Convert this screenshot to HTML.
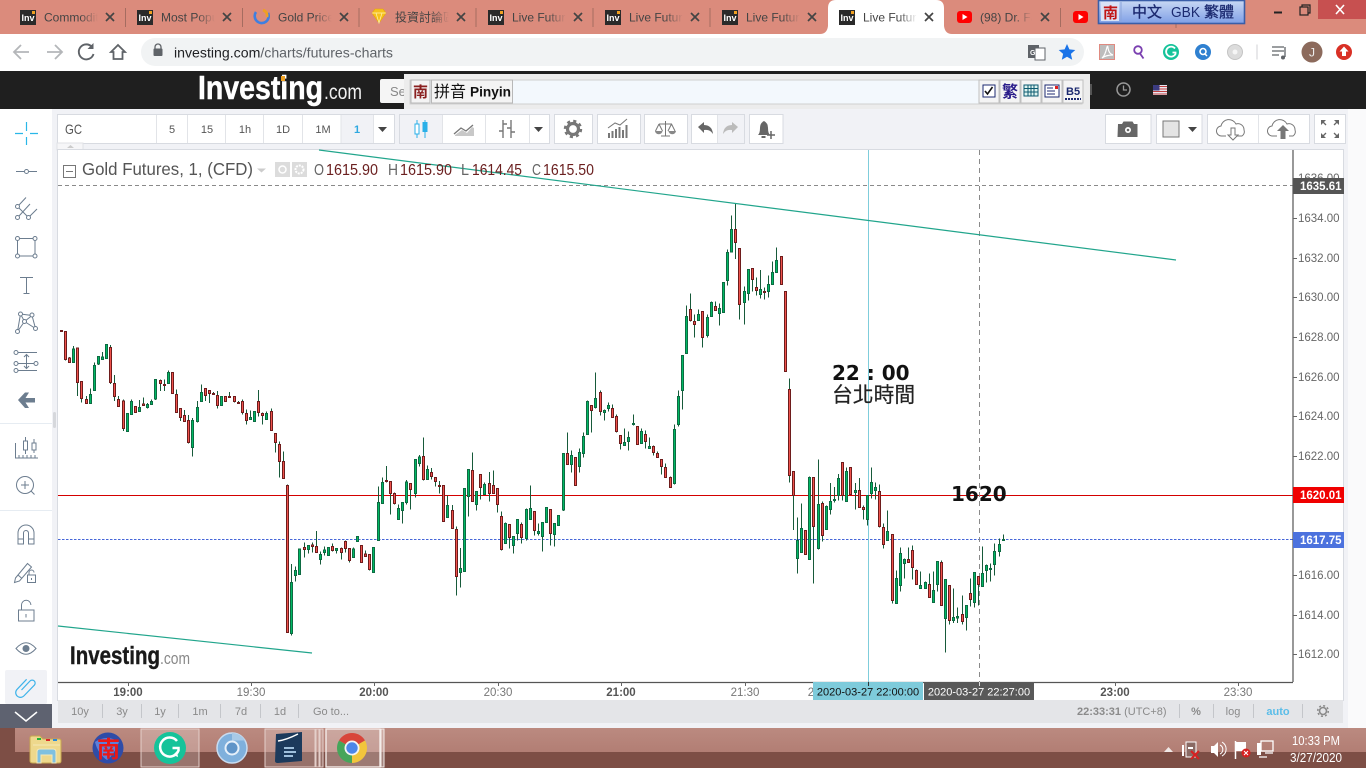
<!DOCTYPE html>
<html><head><meta charset="utf-8"><title>Live Futures Chart</title>
<style>
html,body{margin:0;padding:0;width:1366px;height:768px;overflow:hidden;background:#f1f2f6}
svg{display:block;position:absolute;left:0;top:0}
text{font-family:"Liberation Sans","Noto Sans CJK TC",sans-serif}
.t{font-size:12px;fill:#444}
.x{stroke:#444;stroke-width:1.7;fill:none}
.s{stroke:#a56c60;stroke-width:1}
.b{fill:#fff;stroke:#d8dbe1}
.ic{fill:none;stroke:#6c7d8f;stroke-width:1}
.p{font-size:11.5px;fill:#666}
.tm{font-size:11.5px;fill:#777;text-anchor:middle}
.tb{font-size:11.5px;fill:#555;text-anchor:middle;font-weight:bold}
.g{font-size:11px;fill:#8a8a8a;text-anchor:middle}
.tool{font-size:11px;fill:#555;text-anchor:middle}
</style></head>
<body>
<svg width="1366" height="768" viewBox="0 0 1366 768" xmlns="http://www.w3.org/2000/svg">
<defs>
<linearGradient id="f"><stop offset="0" stop-color="#db8b7c" stop-opacity="0"/><stop offset="1" stop-color="#db8b7c"/></linearGradient>
<linearGradient id="fw"><stop offset="0" stop-color="#fff" stop-opacity="0"/><stop offset="1" stop-color="#fff"/></linearGradient>
<linearGradient id="ime" x1="0" y1="0" x2="0" y2="1"><stop offset="0" stop-color="#c8d8f4"/><stop offset="1" stop-color="#7f9fe6"/></linearGradient>
<linearGradient id="tk" x1="0" y1="0" x2="0" y2="1"><stop offset="0" stop-color="#bb8a80"/><stop offset="1" stop-color="#b27e74"/></linearGradient>
</defs>

<!-- tab strip -->
<rect width="1366" height="34" fill="#db8b7c"/>
<path d="M820 34q7 0 8-8V8q0-8 8-8H936q8 0 8 8V26q1 8 8 8z" fill="#fff"/>

<g><rect x="20" y="10" width="16" height="15" fill="#2a2a2a"/><text x="21.5" y="21" font-size="9" font-weight="bold" fill="#fff">Inv</text><rect x="32" y="11" width="3" height="3" fill="#f0a020"/></g>
<text x="44" y="21.5" class="t">Commodities</text><rect x="80" y="6" width="18" height="24" fill="url(#f)"/><rect x="98" y="6" width="26" height="24" fill="#db8b7c"/>
<path class="x" d="M106 13l8 8m0-8l-8 8"/><path class="s" d="M125.5 8v19"/>

<g><rect x="137" y="10" width="16" height="15" fill="#2a2a2a"/><text x="138.5" y="21" font-size="9" font-weight="bold" fill="#fff">Inv</text><rect x="149" y="11" width="3" height="3" fill="#f0a020"/></g>
<text x="161" y="21.5" class="t">Most Popular</text><rect x="197" y="6" width="18" height="24" fill="url(#f)"/><rect x="215" y="6" width="26" height="24" fill="#db8b7c"/>
<path class="x" d="M223 13l8 8m0-8l-8 8"/><path class="s" d="M242.5 8v19"/>

<path d="M256 12a7 7 0 1 0 12 1" fill="none" stroke="#3f7fe0" stroke-width="2.6"/><path d="M263 10q5 2 4 7" fill="none" stroke="#f0a020" stroke-width="2.6"/>
<text x="278" y="21.5" class="t">Gold Price</text><rect x="314" y="6" width="18" height="24" fill="url(#f)"/><rect x="332" y="6" width="26" height="24" fill="#db8b7c"/>
<path class="x" d="M340 13l8 8m0-8l-8 8"/><path class="s" d="M359 8v19"/>

<path d="M372 13l3-4h8l3 4-7 10z" fill="#f6c21c" stroke="#e6a800" stroke-width=".6"/><path d="M372 13h14M376 13l3 10 3-10" stroke="#fff2b0" stroke-width=".7" fill="none"/>
<text x="395" y="21.5" class="t">投資討論區</text><rect x="431" y="6" width="18" height="24" fill="url(#f)"/><rect x="449" y="6" width="26" height="24" fill="#db8b7c"/>
<path class="x" d="M457 13l8 8m0-8l-8 8"/><path class="s" d="M476 8v19"/>

<g><rect x="488" y="10" width="16" height="15" fill="#2a2a2a"/><text x="489.5" y="21" font-size="9" font-weight="bold" fill="#fff">Inv</text><rect x="500" y="11" width="3" height="3" fill="#f0a020"/></g>
<text x="512" y="21.5" class="t">Live Futures</text><rect x="548" y="6" width="18" height="24" fill="url(#f)"/><rect x="566" y="6" width="26" height="24" fill="#db8b7c"/>
<path class="x" d="M574 13l8 8m0-8l-8 8"/><path class="s" d="M593 8v19"/>

<g><rect x="605" y="10" width="16" height="15" fill="#2a2a2a"/><text x="606.500" y="21" font-size="9" font-weight="bold" fill="#fff">Inv</text><rect x="617" y="11" width="3" height="3" fill="#f0a020"/></g>
<text x="629" y="21.5" class="t">Live Futures</text><rect x="665" y="6" width="18" height="24" fill="url(#f)"/><rect x="683" y="6" width="26" height="24" fill="#db8b7c"/>
<path class="x" d="M691 13l8 8m0-8l-8 8"/><path class="s" d="M710 8v19"/>

<g><rect x="722" y="10" width="16" height="15" fill="#2a2a2a"/><text x="723.500" y="21" font-size="9" font-weight="bold" fill="#fff">Inv</text><rect x="734" y="11" width="3" height="3" fill="#f0a020"/></g>
<text x="746" y="21.5" class="t">Live Futures</text><rect x="782" y="6" width="18" height="24" fill="url(#f)"/><rect x="800" y="6" width="22" height="24" fill="#db8b7c"/>
<path class="x" d="M808 13l8 8m0-8l-8 8"/>

<g><rect x="839" y="10" width="16" height="15" fill="#2a2a2a"/><text x="840.500" y="21" font-size="9" font-weight="bold" fill="#fff">Inv</text><rect x="851" y="11" width="3" height="3" fill="#f0a020"/></g>
<text x="863" y="21.5" class="t">Live Futures</text><rect x="899" y="6" width="18" height="24" fill="url(#fw)"/><rect x="917" y="6" width="24" height="24" fill="#fff"/>
<path class="x" d="M925 13l8 8m0-8l-8 8"/>

<rect x="957" y="11" width="15" height="12" rx="3" fill="#f00"/><path d="M962.500 14v6l5-3z" fill="#fff"/>
<text x="980" y="21.5" class="t">(98) Dr. Fauci</text><rect x="1014" y="6" width="18" height="24" fill="url(#f)"/><rect x="1032" y="6" width="26" height="24" fill="#db8b7c"/>
<path class="x" d="M1041 13l8 8m0-8l-8 8"/><path class="s" d="M1060.500 8v19"/>
<rect x="1073" y="11" width="15" height="12" rx="3" fill="#f00"/><path d="M1078.500 14v6l5-3z" fill="#fff"/>
<path class="s" d="M1176 24v4"/>

<!-- window controls -->
<rect x="1318" width="48" height="19" fill="#c75050"/>
<path d="M1274 12.500h8" stroke="#222" stroke-width="2"/>
<rect x="1300" y="7" width="8" height="8" fill="none" stroke="#222" stroke-width="1.200"/><path d="M1302 7V5h8v8h-2" fill="none" stroke="#222" stroke-width="1.200"/>
<path d="M1336 5l8 9m0-9l-8 9" stroke="#fff" stroke-width="1.600"/>

<!-- IME top bar -->
<rect x="1098.500" y=".5" width="146" height="23" fill="url(#ime)" stroke="#3a5ea8" stroke-width="1.600"/>
<rect x="1101" y="2" width="18" height="19" fill="#d9e2f6"/>
<text x="1103" y="18" font-size="15" font-weight="bold" fill="#c11414">南</text>
<path d="M1121 2v20" stroke="#8aa4da"/>
<text x="1132" y="17" font-size="15" fill="#1c2a70" stroke="#1c2a70" stroke-width=".3">中文</text>
<text x="1171" y="17" font-size="15" fill="#1c2a70" textLength="29" lengthAdjust="spacingAndGlyphs">GBK</text>
<text x="1204" y="17" font-size="15" fill="#1c2a70" stroke="#1c2a70" stroke-width=".3">繁體</text>

<!-- toolbar -->
<rect y="34" width="1366" height="37" fill="#fff"/>
<path d="M29 52H15m6-7l-7 7 7 7" fill="none" stroke="#b4b6b9" stroke-width="1.800"/>
<path d="M47 52h14m-6-7l7 7-7 7" fill="none" stroke="#b4b6b9" stroke-width="1.800"/>
<path d="M92 47a7.500 7.500 0 1 0 1.500 7" fill="none" stroke="#5f6368" stroke-width="1.900"/><path d="M93.500 43v6h-6z" fill="#5f6368"/>
<path d="M111 52l7-7 7 7h-2.500v7h-9v-7z" fill="none" stroke="#5f6368" stroke-width="1.800"/>
<rect x="141" y="38" width="943" height="28" rx="14" fill="#f1f3f4"/>
<path d="M155 48.500v-1.500a3 3 0 0 1 6 0v1.500" fill="none" stroke="#5f6368" stroke-width="1.300"/><rect x="153.500" y="48.500" width="9" height="7.500" rx="1" fill="#5f6368"/>
<text x="174" y="57.500" font-size="14" fill="#5f6368" textLength="219" lengthAdjust="spacingAndGlyphs"><tspan fill="#202124">investing.com</tspan>/charts/futures-charts</text>

<rect x="1028" y="45" width="11" height="13" fill="#5f6368"/><rect x="1035" y="48" width="10" height="12" fill="#fff" stroke="#5f6368"/><text x="1030" y="55" font-size="7" fill="#fff" font-weight="bold">G</text>
<path d="M1067 44l2.400 5.400 5.900.6-4.400 3.900 1.300 5.800-5.200-3-5.200 3 1.300-5.800-4.400-3.900 5.900-.6z" fill="#1a73e8"/>
<rect x="1099.500" y="44.500" width="15" height="15" fill="#bdbdbd" stroke="#e08a80"/><path d="M1102 58q3-2 5-11q1-2 1 1q1 6 5 7q-7 0-11 3" fill="none" stroke="#fff" stroke-width="1.200"/>
<circle cx="1138" cy="50" r="3.800" fill="none" stroke="#7a3fb0" stroke-width="1.800"/><path d="M1140 53.500l3.500 5" stroke="#7a3fb0" stroke-width="1.800"/>
<circle cx="1171" cy="52" r="8" fill="#15c39a"/><path d="M1175 48.500a5 5 0 1 0 .5 5.500v-1.500h-3" fill="none" stroke="#fff" stroke-width="1.800"/>
<circle cx="1203" cy="52" r="8" fill="#2f80d0"/><circle cx="1203" cy="51.500" r="3" fill="none" stroke="#fff" stroke-width="1.600"/><path d="M1205 54l2 2" stroke="#fff" stroke-width="1.500"/>
<circle cx="1235" cy="52" r="7.500" fill="#dcdcdc" stroke="#c4c4c4"/><circle cx="1235" cy="52" r="2.500" fill="#f6f6f6"/>
<path d="M1257 44.500v15" stroke="#d0d2d4"/>
<path d="M1272 47h12M1272 51h12M1272 55h7" stroke="#5f6368" stroke-width="1.300"/><path d="M1285 47v10" stroke="#5f6368" stroke-width="1.300"/><circle cx="1283" cy="57.500" r="2" fill="#5f6368"/>
<circle cx="1312" cy="52" r="10.500" fill="#8c6a5c"/><text x="1312" y="56.500" font-size="12" fill="#eee" text-anchor="middle">J</text>
<circle cx="1344" cy="52" r="8" fill="#d93025"/><path d="M1344 46.500l4.500 5h-2.500v4.500h-4v-4.500h-2.500z" fill="#fff"/>

<!-- black bar -->
<rect y="71" width="1366" height="38" fill="#1f1f1f"/>
<text x="198" y="99" font-size="33" font-weight="bold" fill="#fff" stroke="#fff" stroke-width=".5" textLength="125" lengthAdjust="spacingAndGlyphs">Investing</text>
<rect x="281" y="76" width="4" height="5" fill="#f0a020"/>
<text x="324" y="99" font-size="21" fill="#f0f0f0" textLength="38" lengthAdjust="spacingAndGlyphs">.com</text>
<rect x="380" y="79" width="30" height="24" rx="2" fill="#f5f5f5"/><text x="390" y="96" font-size="13" fill="#888">Se</text>
<path d="M1091 84v11" stroke="#555" stroke-width="2"/>
<circle cx="1123.500" cy="89.500" r="6.500" fill="none" stroke="#999" stroke-width="1.500"/><path d="M1123.500 85.500v4.500h3.500" fill="none" stroke="#999" stroke-width="1.300"/>
<rect x="1153" y="85" width="14" height="10" fill="#e8e8f0"/><path d="M1153 86.500h14M1153 89h14M1153 91.500h14M1153 94h14" stroke="#c04040"/><rect x="1153" y="85" width="6.500" height="5.500" fill="#3b3b80"/>

<!-- IME bar -->
<rect x="404" y="74" width="686" height="35" fill="#ececec"/>
<rect x="410" y="80" width="672" height="24" fill="#f3f8fd" stroke="#cfcfcf"/>
<rect x="411" y="80" width="19" height="23" fill="#f4f4f4" stroke="#b8b8b8"/>
<text x="413" y="97" font-size="15" font-weight="bold" fill="#8a2020">南</text>
<rect x="431.500" y="80" width="81" height="23" fill="#f4f4f4" stroke="#b8b8b8"/>
<text x="434" y="97" font-size="16" fill="#111">拼音</text><text x="470" y="96.500" font-size="13.500" font-weight="bold" fill="#111" textLength="41" lengthAdjust="spacingAndGlyphs">Pinyin</text>
<g fill="#f4f4f4" stroke="#c0c0c0"><rect x="979" y="80" width="20" height="23"/><rect x="1000" y="80" width="20" height="23"/><rect x="1021" y="80" width="20" height="23"/><rect x="1042" y="80" width="20" height="23"/><rect x="1063" y="80" width="20" height="23"/></g>
<rect x="983" y="85" width="12" height="12" fill="#fff" stroke="#1c2a70"/><path d="M985 91l2.500 3 5-7" fill="none" stroke="#111" stroke-width="1.600"/>
<text x="1002" y="97" font-size="16" font-weight="bold" fill="#2a1c8a">繁</text>
<rect x="1024" y="85" width="14" height="11" fill="#dff4f0" stroke="#0c5a70" stroke-width="1"/><path d="M1024 88.500h14M1024 92h14M1028 85v11M1031 85v11M1034 85v11" stroke="#0c5a70"/>
<rect x="1045" y="85" width="14" height="12" fill="#fff" stroke="#1c2a70"/><path d="M1047 88h6M1047 91h8M1047 94h8" stroke="#1c2a70"/><rect x="1055" y="86" width="3" height="3" fill="#e02020"/>
<text x="1066" y="95" font-size="11" font-weight="bold" fill="#1c2a70">B5</text><path d="M1065 99h16" stroke="#1c2a70" stroke-dasharray="2 1" stroke-width="2"/>

<!-- page areas -->
<rect y="109" width="1366" height="619" fill="#f1f2f6"/>
<rect x="1348" y="109" width="18" height="619" fill="#fafafb"/>
<rect y="109" width="52" height="595" fill="#fff"/>
<path d="M0 423.500h52M0 510.500h52" stroke="#e6ecf2"/>
<rect x="53" y="412" width="3" height="16" rx="1.500" fill="#d6d8dc"/>

<!-- top chart toolbar -->
<rect x="57.500" y="114.500" width="337" height="29" class="b"/>
<rect x="341" y="115" width="33" height="28" fill="#f1f2f6"/>
<path d="M156.500 115v28M187.500 115v28M225.500 115v28M263.500 115v28M302.500 115v28M341 115v28M373.500 115v28" stroke="#e2e4e8"/>
<text x="65" y="134" font-size="14" fill="#555" textLength="17" lengthAdjust="spacingAndGlyphs">GC</text>
<text x="172" y="133" class="tool">5</text><text x="207" y="133" class="tool">15</text><text x="245" y="133" class="tool">1h</text><text x="283" y="133" class="tool">1D</text><text x="323" y="133" class="tool">1M</text><text x="357" y="133" class="tool" style="fill:#2ea8e0;font-weight:bold">1</text>
<path d="M378 127h9l-4.500 5z" fill="#444"/>

<rect x="399.500" y="114.500" width="150" height="29" class="b"/><rect x="400" y="115" width="42" height="28" fill="#f1f2f6"/>
<path d="M442.500 115v28M485.500 115v28M529.500 115v28" stroke="#e2e4e8"/>
<path d="M417 120v18M425 120v18" stroke="#2ab0e8"/><rect x="415" y="124" width="4" height="10" fill="#fff" stroke="#2ab0e8"/><rect x="422.500" y="122" width="5" height="10" fill="#2ab0e8"/>
<path d="M455 135l7-5 5 3 5-6 2 1v8h-19z" fill="#c8c8c8"/><path d="M454 134l7-6 5 3 7-6" fill="none" stroke="#777" stroke-width="1.300"/>
<path d="M503 120v18M511 120v18M499 131h4M503 124h4M507 128h4M511 132h4" fill="none" stroke="#777" stroke-width="1.400"/>
<path d="M534 127h9l-4.500 5z" fill="#444"/>

<rect x="554.500" y="114.500" width="38" height="29" class="b"/>
<circle cx="573" cy="129" r="5.500" fill="none" stroke="#777" stroke-width="3.200"/><circle cx="573" cy="129" r="8" fill="none" stroke="#777" stroke-width="2.400" stroke-dasharray="3.100 3.180"/>
<rect x="597.500" y="114.500" width="43" height="29" class="b"/>
<path d="M609 138v-5M612.500 138v-7M616 138v-9M619.500 138v-11M623 138v-8M626.500 138v-13" stroke="#777" stroke-width="2"/><path d="M608 128l7-5 5 2 7-6" fill="none" stroke="#777"/>
<rect x="644.500" y="114.500" width="43" height="29" class="b"/>
<path d="M665.500 121v15M659 124h13M661 136h9M659 124l-3.500 7m3.500-7l3.500 7m9-7l-3.500 7m3.500-7l3.500 7" fill="none" stroke="#777"/><path d="M655 131a3.500 3 0 0 0 7.500 0zM668.500 131a3.500 3 0 0 0 7.500 0z" fill="#888"/>
<rect x="691.500" y="114.500" width="53" height="29" class="b"/><rect x="718" y="115" width="26" height="28" fill="#f1f2f6"/><path d="M717.500 115v28" stroke="#e2e4e8"/>
<path d="M698 127l6-5v3q8 0 9 9q-3-5-9-4v3z" fill="#666"/><path d="M738 127l-6-5v3q-8 0-9 9q3-5 9-4v3z" fill="#bbb"/>
<rect x="749.500" y="114.500" width="33.500" height="29" class="b"/>
<path d="M758 135q2-2 2-7t4-7q4 2 4 7t2 7z" fill="#666"/><rect x="761.500" y="136" width="4" height="2" fill="#666"/><path d="M767 135h8M771 131v8" stroke="#666" stroke-width="1.500"/>

<rect x="1105.500" y="114.500" width="45.500" height="29" class="b"/>
<path d="M1118 124h4l1.500-2.500h9l1.500 2.500h3.500v13h-20z" fill="#666"/><circle cx="1128" cy="130" r="3" fill="#fff"/><circle cx="1128" cy="130" r="1.300" fill="#666"/>
<rect x="1156.500" y="114.500" width="45.500" height="29" class="b"/><rect x="1163" y="121" width="16" height="16" fill="#e4e4e4" stroke="#777"/>
<path d="M1188 127h9l-4.500 5z" fill="#444"/>
<rect x="1207.500" y="114.500" width="102" height="29" class="b"/><path d="M1258.500 115v28" stroke="#e2e4e8"/>
<path d="M1226 136h-4a5 5 0 0 1-1-10a8 8 0 0 1 15-2a6 6 0 0 1 8 6a5 5 0 0 1-2 6h-6" fill="none" stroke="#777"/><path d="M1231 128h4v7h3l-5 5-5-5h3z" fill="#fff" stroke="#777"/>
<path d="M1277 136h-4a5 5 0 0 1-1-10a8 8 0 0 1 15-2a6 6 0 0 1 8 6a5 5 0 0 1-2 6h-4" fill="none" stroke="#777"/><path d="M1283 125l6 6h-3.500v8h-5v-8h-3.500z" fill="#777"/>
<rect x="1314.500" y="114.500" width="31" height="29" class="b"/>
<path d="M1321 120h5l-5 5zM1339 120h-5l5 5zM1321 138h5l-5-5zM1339 138h-5l5-5z" fill="#666"/><path d="M1323 122l3 3M1337 122l-3 3M1323 136l3-3M1337 136l-3-3" stroke="#666" stroke-width="1.300"/>

<!-- tab handle -->
<rect x="57" y="143" width="26" height="7" fill="#f6f6f8" stroke="#e0e2e6"/><path d="M67 148l3.500-3 3.500 3z" fill="#ccc"/>

<!-- chart panel -->
<rect x="57.500" y="149.500" width="1286" height="551" fill="#fff" stroke="#d8dbe1"/>

<path d="M58 185.500H1293" stroke="#8a8a8a" stroke-dasharray="4 3"/>
<path d="M58 495.500H1293" stroke="#d40000" stroke-width="1"/>
<path d="M58 539.500H1293" stroke="#4566d8" stroke-dasharray="2.500 1.500"/>
<path d="M868.500 150V682" stroke="#7fcddb" stroke-width="1"/>
<path d="M979.500 150V682" stroke="#8a8a8a" stroke-dasharray="5 4"/>

<!-- candles -->
<g transform="translate(60 320) scale(.33333)" shape-rendering="crispEdges">
<path fill="none" stroke="#175a3a" stroke-width="3" d="M16 34V122M28 111V128M40 78V128M52 84V228M64 184V248M79 228V251M91 205V250M103 128V212M115 109V135M127 96V119M139 73V116M151 75V192M163 165V243M175 228V260M190 238V333M202 280V335M214 238V284M226 259V278M238 240V275M250 232V257M262 249V266M274 238V254M286 178V240M301 178V213M313 178V213M325 151V191M337 157V221M349 209V278M361 265V303M373 270V305M385 285V371M397 294V410M412 243V308M424 193V245M436 205V243M448 211V249M460 216V224M472 213V266M484 229V257M496 229V245M508 216V233M523 229V248M535 243V251M547 238V284M559 268V314M571 272V299M583 274V305M595 210V290M607 277V314M619 274V299M634 265V332M646 340V398M658 364V473M670 394V476M682 493V938M694 732V947M706 739V785M718 685V764M733 667V713M745 676V701M757 667V698M769 633V698M781 695V734M793 679V707M805 682V707M817 670V695M829 685V701M844 682V719M856 661V698M868 685V727M880 682V713M892 649V665M904 676V727M916 691V710M928 703V752M940 682V758M955 499V661M967 472V551M979 438V487M991 484V584M1003 517V553M1015 553V599"/>
<path fill="#00b864" stroke="#0d6b42" stroke-width="3" d="M37 87h6V128h-6zM88 223h6V250h-6zM100 136h6V212h-6zM112 109h6V132h-6zM124 111h6V119h-6zM136 73h6V116h-6zM199 280h6V335h-6zM211 244h6V284h-6zM235 262h6V275h-6zM259 253h6V263h-6zM271 244h6V254h-6zM283 178h6V237h-6zM322 157h6V191h-6zM394 301h6V383h-6zM409 262h6V305h-6zM421 217h6V245h-6zM481 229h6V257h-6zM568 292h6V299h-6zM580 274h6V305h-6zM616 280h6V299h-6zM691 787h6V941h-6zM703 751h6V767h-6zM715 687h6V764h-6zM742 676h6V689h-6zM778 703h6V719h-6zM790 690h6V698h-6zM802 682h6V707h-6zM826 685h6V692h-6zM877 687h6V713h-6zM889 649h6V665h-6zM937 682h6V758h-6zM952 547h6V661h-6zM964 487h6V551h-6zM1012 565h6V599h-6z"/>
<path fill="#f0524c" stroke="#6e1c1c" stroke-width="3" d="M1 31h6V34h-6zM13 34h6V119h-6zM25 114h6V128h-6zM49 84h6V188h-6zM61 184h6V236h-6zM76 238h6V251h-6zM148 82h6V188h-6zM160 190h6V230h-6zM172 238h6V260h-6zM187 243h6V326h-6zM223 259h6V278h-6zM247 252h6V257h-6zM298 181h6V191h-6zM310 193h6V197h-6zM334 157h6V221h-6zM346 223h6V278h-6zM358 265h6V293h-6zM370 286h6V305h-6zM382 301h6V368h-6zM433 205h6V227h-6zM445 211h6V221h-6zM457 220h6V224h-6zM469 226h6V257h-6zM493 229h6V245h-6zM505 229h6V233h-6zM520 229h6V245h-6zM532 247h6V251h-6zM544 244h6V278h-6zM556 280h6V302h-6zM592 244h6V278h-6zM604 280h6V287h-6zM631 274h6V332h-6zM643 340h6V368h-6zM655 373h6V425h-6zM667 424h6V476h-6zM679 496h6V938h-6zM730 682h6V689h-6zM754 675h6V680h-6zM766 679h6V698h-6zM814 679h6V692h-6zM841 685h6V698h-6zM853 664h6V686h-6zM865 685h6V722h-6zM901 676h6V727h-6zM913 702h6V710h-6zM925 703h6V749h-6zM976 482h6V485h-6zM988 484h6V521h-6zM1000 520h6V551h-6z"/>
</g>
<g transform="translate(370 280) scale(.33333)" shape-rendering="crispEdges">
<path fill="none" stroke="#175a3a" stroke-width="3" d="M97 667V731M109 600V674M121 610V689M136 538V653M148 525V560M160 472V602M172 556V599M184 564V599M196 592V620M208 603V641M220 616V725M232 646V713M247 675V745M259 739V947M271 804V923M283 625V875M295 568V710M307 517V665M319 634V692M331 583V659M343 607V644M358 576V665M370 571V641M382 625V698M394 694V812M406 727V791M418 733V806M430 770V821M442 718V782M454 727V791M469 685V782M481 616V719M493 694V767M505 730V767M517 727V815M529 682V727M541 688V797M553 730V800M565 706V737M580 520V693M592 457V554M604 511V578M616 532V616M628 505V578M640 457V533M652 361V463M664 376V458M676 277V386M691 331V406M703 388V422M715 367V394M727 373V412M739 403V458M751 466V509M763 445V497M775 454V512M790 403V437M802 439V494M814 445V491M826 451V506M838 472V505M850 496V527M862 514V532M874 538V584M886 550V592M901 589V622M913 433V614M925 331V439M937 226V389M949 76V221M961 40V125M973 103V173M985 88V122M997 94V203M1012 103V173"/>
<path fill="#00b864" stroke="#0d6b42" stroke-width="3" d="M94 667h6V692h-6zM106 606h6V668h-6zM133 538h6V641h-6zM145 531h6V551h-6zM169 568h6V599h-6zM229 676h6V713h-6zM268 865h6V878h-6zM280 625h6V875h-6zM292 568h6V650h-6zM316 634h6V674h-6zM340 613h6V644h-6zM403 730h6V791h-6zM427 770h6V797h-6zM439 718h6V761h-6zM466 688h6V776h-6zM478 685h6V719h-6zM502 754h6V761h-6zM514 727h6V770h-6zM526 682h6V727h-6zM550 730h6V764h-6zM562 706h6V737h-6zM577 520h6V690h-6zM601 526h6V554h-6zM625 517h6V560h-6zM637 469h6V521h-6zM649 364h6V463h-6zM673 355h6V383h-6zM700 391h6V397h-6zM712 376h6V386h-6zM760 487h6V497h-6zM772 472h6V485h-6zM787 430h6V434h-6zM811 454h6V491h-6zM835 499h6V505h-6zM910 448h6V611h-6zM922 349h6V433h-6zM934 226h6V332h-6zM946 109h6V221h-6zM982 103h6V122h-6zM1009 112h6V167h-6z"/>
<path fill="#f0524c" stroke="#6e1c1c" stroke-width="3" d="M118 610h6V629h-6zM157 529h6V599h-6zM181 577h6V590h-6zM193 592h6V605h-6zM205 616h6V620h-6zM217 616h6V725h-6zM244 691h6V745h-6zM256 748h6V890h-6zM304 571h6V665h-6zM328 583h6V622h-6zM355 610h6V641h-6zM367 616h6V641h-6zM379 625h6V674h-6zM391 709h6V809h-6zM415 733h6V772h-6zM451 733h6V773h-6zM490 694h6V752h-6zM538 688h6V761h-6zM589 520h6V554h-6zM613 532h6V616h-6zM661 376h6V391h-6zM688 337h6V394h-6zM724 385h6V412h-6zM736 409h6V455h-6zM748 466h6V490h-6zM799 439h6V494h-6zM823 463h6V485h-6zM847 499h6V518h-6zM859 520h6V532h-6zM871 538h6V559h-6zM883 562h6V592h-6zM898 592h6V622h-6zM958 88h6V122h-6zM970 124h6V134h-6zM994 94h6V173h-6z"/>
</g>
<g transform="translate(670 190) scale(.33333)" shape-rendering="crispEdges">
<path fill="none" stroke="#175a3a" stroke-width="3" d="M124 334V380M136 334V362M148 340V407M160 277V367M172 178V287M184 76V188M196 40V207M208 176V389M223 289V404M235 238V332M247 235V305M259 262V317M271 240V326M283 292V329M295 256V323M307 214V284M319 172V248M334 199V284M346 304V545"/>
<path fill="#00b864" stroke="#0d6b42" stroke-width="3" d="M121 337h6V380h-6zM145 355h6V371h-6zM157 277h6V367h-6zM169 187h6V272h-6zM181 118h6V186h-6zM220 304h6V338h-6zM232 238h6V310h-6zM268 298h6V314h-6zM292 283h6V305h-6zM304 247h6V284h-6zM316 211h6V248h-6z"/>
<path fill="#f0524c" stroke="#6e1c1c" stroke-width="3" d="M133 349h6V362h-6zM193 118h6V158h-6zM205 176h6V344h-6zM244 235h6V269h-6zM256 292h6V302h-6zM280 304h6V308h-6zM331 199h6V284h-6zM343 304h6V545h-6z"/>
</g>
<g transform="translate(780 440) scale(.33333)" shape-rendering="crispEdges">
<path fill="none" stroke="#175a3a" stroke-width="3" d="M28 -185V128M40 94V270M52 232V401M64 190V338M76 271V344M88 109V359M100 112V431M115 58V329M127 184V305M139 196V269M151 129V224M163 141V188M175 102V181M187 67V181M199 82V184M211 82V164M226 129V209M238 114V203M250 196V239M262 166V257M274 82V176M286 127V179M298 133V262M310 250V326M322 211V302M337 284V491M349 391V490M361 322V455M373 355V416M385 322V367M397 316V419M409 388V434M421 394V445M436 424V445M448 400V472M460 394V487M472 364V454M484 361V496M496 418V637M508 436V553M520 445V549M532 502V549M547 466V553M559 496V571M571 415V500M583 397V502M595 409V496M607 319V439M619 373V428M631 370V425M643 310V407M658 295V349M670 283V301"/>
<path fill="#00b864" stroke="#0d6b42" stroke-width="3" d="M49 301h6V356h-6zM61 265h6V338h-6zM85 112h6V359h-6zM112 193h6V326h-6zM136 199h6V269h-6zM148 184h6V209h-6zM160 178h6V182h-6zM172 115h6V166h-6zM196 94h6V184h-6zM223 151h6V158h-6zM259 166h6V239h-6zM271 127h6V160h-6zM283 142h6V151h-6zM319 274h6V302h-6zM346 415h6V490h-6zM358 340h6V437h-6zM370 358h6V371h-6zM418 436h6V445h-6zM433 427h6V445h-6zM457 451h6V487h-6zM469 364h6V433h-6zM493 418h6V535h-6zM517 532h6V541h-6zM529 530h6V534h-6zM556 496h6V532h-6zM580 397h6V487h-6zM604 400h6V439h-6zM616 376h6V391h-6zM628 385h6V388h-6zM640 334h6V374h-6zM655 313h6V334h-6zM667 298h6V301h-6z"/>
<path fill="#f0524c" stroke="#6e1c1c" stroke-width="3" d="M25 -152h6V107h-6zM37 94h6V166h-6zM73 271h6V344h-6zM97 112h6V260h-6zM124 190h6V287h-6zM184 67h6V166h-6zM208 82h6V164h-6zM235 151h6V203h-6zM247 202h6V208h-6zM295 154h6V260h-6zM307 262h6V314h-6zM334 284h6V482h-6zM382 358h6V367h-6zM394 331h6V382h-6zM406 391h6V434h-6zM445 433h6V472h-6zM481 367h6V496h-6zM505 436h6V541h-6zM544 523h6V544h-6zM568 460h6V478h-6zM592 409h6V434h-6z"/>
</g>

<!-- trend lines -->
<path d="M319 150L1176 260" stroke="#21a58c" stroke-width="1.200" fill="none"/>
<path d="M58 626L312 653" stroke="#21a58c" stroke-width="1.200" fill="none"/>

<!-- annotations -->
<text x="832" y="380" font-size="20" font-weight="bold" fill="#111" style="font-family:'DejaVu Sans',sans-serif">22 : 00</text>
<text x="832" y="402" font-size="20.800" fill="#222" stroke="#222" stroke-width=".2">台北時間</text>
<text x="951" y="501" font-size="20" font-weight="bold" fill="#111" style="font-family:'DejaVu Sans',sans-serif">1620</text>

<!-- watermark -->
<text x="70" y="664" font-size="25" font-weight="bold" fill="#1a1a1a" stroke="#1a1a1a" stroke-width=".4" textLength="90" lengthAdjust="spacingAndGlyphs">Investing</text>
<text x="160" y="664" font-size="17" fill="#888" textLength="30" lengthAdjust="spacingAndGlyphs">.com</text>

<!-- legend -->
<rect x="63.500" y="165.500" width="12" height="12" fill="#fff" stroke="#777"/><path d="M66 171.500h7" stroke="#777"/>
<text x="82" y="175" font-size="17.500" fill="#555" textLength="171" lengthAdjust="spacingAndGlyphs">Gold Futures, 1, (CFD)</text>
<path d="M257 168.500h9l-4.500 4z" fill="#ccc"/>
<rect x="275" y="162" width="15" height="15" fill="#dcdcdc"/><circle cx="282.500" cy="169.500" r="3.500" fill="none" stroke="#fff" stroke-width="1.500"/>
<rect x="292" y="162" width="15" height="15" fill="#dcdcdc"/><circle cx="299.500" cy="169.500" r="4" fill="none" stroke="#fff" stroke-width="2" stroke-dasharray="2 1"/>
<text x="314" y="175" font-size="15.500" fill="#666" textLength="10" lengthAdjust="spacingAndGlyphs">O</text><text x="326" y="175" font-size="15.500" fill="#6b2020" textLength="52" lengthAdjust="spacingAndGlyphs">1615.90</text>
<text x="388" y="175" font-size="15.500" fill="#666" textLength="10" lengthAdjust="spacingAndGlyphs">H</text><text x="400" y="175" font-size="15.500" fill="#6b2020" textLength="52" lengthAdjust="spacingAndGlyphs">1615.90</text>
<text x="461" y="175" font-size="15.500" fill="#666" textLength="8" lengthAdjust="spacingAndGlyphs">L</text><text x="472" y="175" font-size="15.500" fill="#6b2020" textLength="50" lengthAdjust="spacingAndGlyphs">1614.45</text>
<text x="532" y="175" font-size="15.500" fill="#666" textLength="9" lengthAdjust="spacingAndGlyphs">C</text><text x="543" y="175" font-size="15.500" fill="#6b2020" textLength="51" lengthAdjust="spacingAndGlyphs">1615.50</text>

<!-- price axis -->
<path d="M1293 150V682" stroke="#555" stroke-width="1.200"/>
<path d="M1293 178.500h4M1293 218.500h4M1293 258.500h4M1293 297.500h4M1293 337.500h4M1293 377.500h4M1293 416.500h4M1293 456.500h4M1293 575.500h4M1293 615.500h4M1293 654.500h4" stroke="#666"/>
<text x="1298" y="182" class="p">1636.00</text><text x="1298" y="222" class="p">1634.00</text><text x="1298" y="262" class="p">1632.00</text><text x="1298" y="301" class="p">1630.00</text><text x="1298" y="341" class="p">1628.00</text><text x="1298" y="381" class="p">1626.00</text><text x="1298" y="420" class="p">1624.00</text><text x="1298" y="460" class="p">1622.00</text><text x="1298" y="579" class="p">1616.00</text><text x="1298" y="619" class="p">1614.00</text><text x="1298" y="658" class="p">1612.00</text>
<rect x="1293" y="178" width="51" height="16" fill="#555"/><text x="1300" y="190" font-size="11.500" font-weight="bold" fill="#fff">1635.61</text>
<rect x="1293" y="487" width="51" height="16" fill="#f00000"/><text x="1300" y="499" font-size="11.500" font-weight="bold" fill="#fff">1620.01</text>
<rect x="1293" y="532" width="51" height="16" fill="#4c72de"/><text x="1300" y="544" font-size="11.500" font-weight="bold" fill="#fff">1617.75</text>

<!-- time axis -->
<path d="M58 682.500H1293" stroke="#555" stroke-width="1.200"/>
<path d="M128.500 682v4M251.500 682v4M374.500 682v4M498.500 682v4M621.500 682v4M745.500 682v4M1115.500 682v4M1238.500 682v4" stroke="#666"/>
<text x="128" y="696" class="tb">19:00</text><text x="251" y="696" class="tm">19:30</text><text x="374" y="696" class="tb">20:00</text><text x="498" y="696" class="tm">20:30</text><text x="621" y="696" class="tb">21:00</text><text x="745" y="696" class="tm">21:30</text><text x="811" y="696" class="tm">2</text><text x="1115" y="696" class="tb">23:00</text><text x="1238" y="696" class="tm">23:30</text>
<rect x="813" y="682" width="110" height="18" fill="#7ecbdb"/><path d="M868.500 682v4" stroke="#333"/><text x="868" y="695.500" font-size="11" fill="#111" text-anchor="middle">2020-03-27 22:00:00</text>
<rect x="924" y="682" width="110" height="18" fill="#595959"/><path d="M979.500 682v4" stroke="#ddd"/><text x="979" y="695.500" font-size="11" fill="#fff" text-anchor="middle">2020-03-27 22:27:00</text>

<!-- bottom bar -->
<rect x="58" y="700" width="1285" height="23" fill="#e4e5e8"/>
<text x="80" y="715" class="g">10y</text><text x="122" y="715" class="g">3y</text><text x="160" y="715" class="g">1y</text><text x="200" y="715" class="g">1m</text><text x="241" y="715" class="g">7d</text><text x="280" y="715" class="g">1d</text><text x="331" y="715" class="g">Go to...</text>
<path d="M102.500 704v14M141.500 704v14M178.500 704v14M220.500 704v14M260.500 704v14M298.500 704v14M1179.500 704v14M1213.500 704v14M1253.500 704v14M1302.500 704v14" stroke="#c4c6ca"/>
<text x="1077" y="715" font-size="11" fill="#8a8a8a"><tspan font-weight="bold">22:33:31</tspan> (UTC+8)</text>
<text x="1196" y="715" class="g" style="font-weight:bold">%</text><text x="1233" y="715" class="g">log</text><text x="1278" y="715" class="g" style="fill:#5bbde8;font-weight:bold">auto</text>
<circle cx="1323" cy="711" r="3.500" fill="none" stroke="#8a8a8a" stroke-width="1.600"/><circle cx="1323" cy="711" r="5.300" fill="none" stroke="#8a8a8a" stroke-width="1.500" stroke-dasharray="2 2.160"/>

<!-- left tools -->
<path d="M26.500 122v9M26.500 137v8M15 133.500h8M30 133.500h8" stroke="#2ab7e8" stroke-width="1.200"/>
<g class="ic">
<path d="M16 171.500h8M29 171.500h8"/><circle cx="26.500" cy="171.500" r="2"/>
<circle cx="17.500" cy="206.500" r="2"/><circle cx="17.500" cy="217.500" r="2"/><circle cx="28.500" cy="217.500" r="2"/><path d="M19 205l7-7.500 M19 216l11-12 M30 216l7-7 M19 208l8 8"/>
<rect x="17.500" y="238.500" width="17.500" height="17.500"/><g fill="#fff"><circle cx="17.500" cy="238.500" r="2"/><circle cx="35" cy="238.500" r="2"/><circle cx="17.500" cy="256" r="2"/><circle cx="35" cy="256" r="2"/></g>
<path d="M20 277.500h13M26.500 277.500v16M23.500 293.500h6"/>
<path d="M17.500 331.500L20.500 314 24.500 321.500 32 315.500 35.500 328.500 24.500 321.500 17.500 331.500M20.500 314L32 315.500"/><g fill="#fff"><circle cx="20.500" cy="314" r="2"/><circle cx="32" cy="315" r="2"/><circle cx="24.500" cy="321.500" r="2"/><circle cx="35.500" cy="328.500" r="2"/><circle cx="17.500" cy="331.500" r="2"/></g>
<path d="M18 352.500h19M18 363.500h16M18 370.500h19M26.500 355v13M24 357l2.500-2.500 2.500 2.500M24 366l2.500 2.500 2.500-2.500"/><circle cx="16" cy="352.500" r="2"/><circle cx="16" cy="363.500" r="2"/><circle cx="16" cy="370.500" r="2"/><circle cx="36" cy="363.500" r="2"/>
<path d="M15.500 443v15h22.500M19 458v-3M23 458v-3M27 458v-3M31 458v-3M35 458v-3M25.500 437v17M34 439v14"/><rect x="23.500" y="441" width="4" height="9" fill="#fff"/><rect x="32" y="443" width="4" height="7" fill="#fff"/>
<circle cx="25" cy="485" r="8.500"/><path d="M31 491l3.500 3.500M21 485h8M25 481v8"/>
<path d="M18 544V533a8 8 0 0 1 16 0V544h-5.500V533a2.500 2.500 0 0 0-5 0V544zM18 539h5.500M28.500 539H34"/>
<path d="M15.500 578L27.500 563.500l4 3.500L19.500 581l-5 1.500zM18 575l4 3.500"/><rect x="27.500" y="575" width="8" height="7.500"/><path d="M29 575v-2.500a2.500 2.500 0 0 1 5 0"/><path d="M31.500 578v2"/>
<rect x="18.500" y="610" width="15.500" height="11"/><path d="M21.500 610v-5a4.700 4.700 0 0 1 9.400 0M26 614v3.500"/>
<path d="M16 648.500Q26 637 36 648.500Q26 660 16 648.500z"/>
</g>
<path d="M18 400l7-7.500h4l-3.500 5.500H35v4.500h-9.500l3.500 5.500h-4z" fill="#6c7d8f"/>
<circle cx="26" cy="648.500" r="3.500" fill="#6c7d8f"/>
<rect x="5" y="670" width="42" height="34" rx="2" fill="#f1f2f6"/>
<path d="M21.500 690l8.500-9a3 3 0 0 1 4.300 4.200l-10.500 10.800a4.700 4.700 0 0 1-6.700-6.700l9.500-10" fill="none" stroke="#3db3ea" stroke-width="1.200"/>
<rect y="704" width="52" height="24" fill="#5e6270"/><path d="M15 712l11 9 11-9" fill="none" stroke="#fff" stroke-width="1.500"/>

<!-- taskbar -->
<rect y="728" width="1366" height="24" fill="url(#tk)"/>
<rect y="752" width="1366" height="16" fill="#7d4e45"/>
<rect y="728" width="15" height="24" fill="#7d4e45"/>
<path d="M30 741v-3q0-2 2-2h8l3 3h16q2 0 2 2v20q0 2-2 2H33q-3 0-3-2z" fill="#eed88c" stroke="#c8a850"/><rect x="37" y="738" width="4" height="2" fill="#22b33a"/><rect x="46" y="739" width="4" height="2" fill="#d82a2a"/><rect x="53" y="739" width="4" height="2" fill="#2a8ad8"/>
<path d="M33 745h27M37 763v-11q0-3 3-3h13q3 0 3 3v11h-4v-8h-11v8z" fill="#7fc0e0" stroke="#f4e8b8"/>
<circle cx="108" cy="748" r="15.500" fill="#2f4ca8"/><path d="M95 742q12-8 24 0q-5 13-12 18q-9-6-12-18" fill="#5f7fd8"/>
<text x="97" y="757" font-size="23" font-weight="bold" fill="#e81818">南</text>
<rect x="141" y="729" width="58" height="38" fill="#ffffff" fill-opacity=".22" stroke="#e4cfca"/>
<circle cx="170" cy="748" r="16" fill="#15c39a"/><path d="M177 741a9.500 9.500 0 1 0 1.500 9.500v-2.500h-6" fill="none" stroke="#fff" stroke-width="2.500"/><path d="M178 757l-5-2 4-4z" fill="#fff"/>
<circle cx="232" cy="748" r="15" fill="#7fb0dc"/><circle cx="232" cy="748" r="15" fill="none" stroke="#c8dcf0" stroke-width="1.500"/><path d="M232 733a15 15 0 0 1 13 7.500h-13z" fill="#a8cae8"/><circle cx="232" cy="748" r="7.500" fill="#e6f0fa"/><circle cx="232" cy="748" r="5.500" fill="#5f94c8"/>
<rect x="265" y="729" width="50" height="38" fill="#fff" fill-opacity=".2" stroke="#e4cfca"/><rect x="316" y="729" width="3" height="38" fill="#fff" fill-opacity=".2" stroke="#e4cfca"/><rect x="320" y="729" width="3" height="38" fill="#fff" fill-opacity=".2" stroke="#e4cfca"/>
<path d="M276 734l26-2v29l-24 2q-3 0-3-2z" fill="#1c3a5c"/><path d="M278 741q8-1 20-7" stroke="#fff" stroke-width="1.500" fill="none"/><path d="M284 748h10M284 752h12M284 756h9" stroke="#9fc0dc" stroke-width="2"/>
<rect x="326" y="729" width="54" height="38" fill="#fff" fill-opacity=".25" stroke="#f4ece9" stroke-width="1.400"/><rect x="381" y="729" width="3" height="38" fill="#fff" fill-opacity=".3" stroke="#f4ece9"/>
<path d="M352 748L339 740.500A15 15 0 0 1 365 740.500z" fill="#d8453a"/><path d="M352 748L339 740.500A15 15 0 0 0 352 763z" fill="#46a55a"/><path d="M352 748L352 763A15 15 0 0 0 365 740.500z" fill="#f2c53c"/><circle cx="352" cy="748" r="7.500" fill="#f4f4f4"/><circle cx="352" cy="748" r="5.700" fill="#4d86e8"/>

<path d="M1164 752l4.500-5 4.500 5z" fill="#f0e8e6"/>
<rect x="1186" y="742" width="10" height="15" fill="#8a6a64" stroke="#fff"/><path d="M1183 745v11M1188 748h5" stroke="#fff" stroke-width="2"/><path d="M1191 751l8 8m0-8l-8 8" stroke="#d82020" stroke-width="2"/>
<path d="M1211 746v7h3l4 4v-15l-4 4z" fill="#fff"/><path d="M1220 745a5 5 0 0 1 0 9M1222 742a8 8 0 0 1 0 14" fill="none" stroke="#fff"/>
<path d="M1235.500 741v18" stroke="#fff" stroke-width="1.500"/><path d="M1236 742h10v9h-10z" fill="#fff"/><circle cx="1246" cy="753" r="4.500" fill="#d82020"/><path d="M1244 751l4 4m0-4l-4 4" stroke="#fff"/>
<rect x="1261" y="741" width="12" height="10" fill="none" stroke="#fff" stroke-width="1.300"/><rect x="1257" y="743" width="4" height="12" fill="#fff"/><path d="M1265 753h8M1259 757h8" stroke="#fff" stroke-width="1.300"/>
<text x="1292" y="745" font-size="13" fill="#fff" textLength="48" lengthAdjust="spacingAndGlyphs">10:33 PM</text>
<text x="1290" y="762" font-size="13" fill="#fff" textLength="52" lengthAdjust="spacingAndGlyphs">3/27/2020</text>
</svg>
</body></html>
